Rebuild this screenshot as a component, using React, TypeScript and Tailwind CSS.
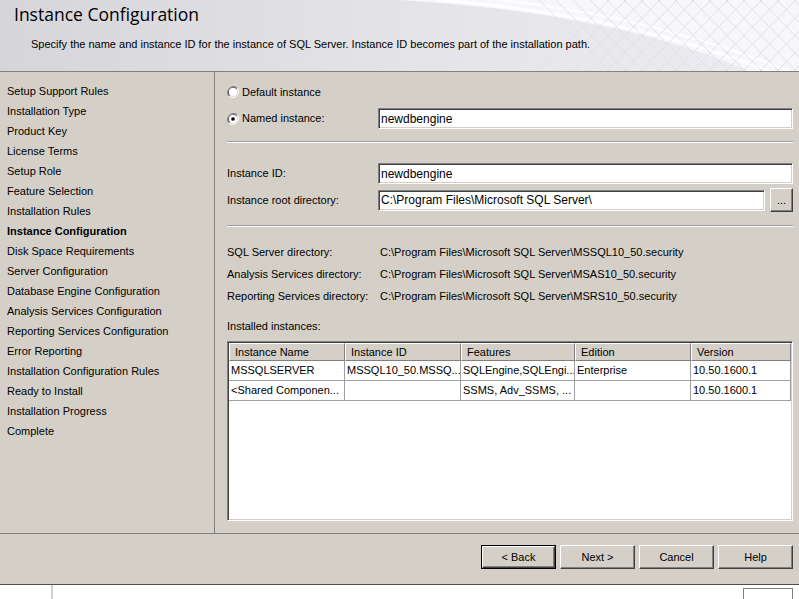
import React from 'react';

const navItems = [
  'Setup Support Rules',
  'Installation Type',
  'Product Key',
  'License Terms',
  'Setup Role',
  'Feature Selection',
  'Installation Rules',
  'Instance Configuration',
  'Disk Space Requirements',
  'Server Configuration',
  'Database Engine Configuration',
  'Analysis Services Configuration',
  'Reporting Services Configuration',
  'Error Reporting',
  'Installation Configuration Rules',
  'Ready to Install',
  'Installation Progress',
  'Complete',
];

const columns = [
  { name: 'Instance Name', w: 'w-[116px]' },
  { name: 'Instance ID', w: 'w-[116px]' },
  { name: 'Features', w: 'w-[114px]' },
  { name: 'Edition', w: 'w-[116px]' },
  { name: 'Version', w: 'w-[100px]' },
];

const rows = [
  ['MSSQLSERVER', 'MSSQL10_50.MSSQ...', 'SQLEngine,SQLEngi...', 'Enterprise', '10.50.1600.1'],
  ['<Shared Componen...', '', 'SSMS, Adv_SSMS, ...', '', '10.50.1600.1'],
];

const sunken =
  'bg-white border border-t-[#808080] border-l-[#808080] border-b-white border-r-white shadow-[inset_1px_1px_0_#404040,inset_-1px_-1px_0_#d4d0c8]';

function Radio({ checked }: { checked?: boolean }) {
  return (
    <svg width="12" height="12" viewBox="0 0 12 12" className="shrink-0">
      <path d="M10.2 1.8A6 6 0 0 0 1.8 10.2" fill="none" stroke="#808080" strokeWidth="1" />
      <path d="M9.5 2.5A5 5 0 0 0 2.5 9.5" fill="none" stroke="#404040" strokeWidth="1" />
      <path d="M1.8 10.2A6 6 0 0 0 10.2 1.8" fill="none" stroke="#ffffff" strokeWidth="1" />
      <circle cx="6" cy="6" r="4.2" fill="#fff" />
      {checked && <circle cx="6" cy="6" r="1.8" fill="#000" />}
    </svg>
  );
}

function Field({ value, className }: { value: string; className?: string }) {
  return (
    <div className={`h-[21px] flex items-center pl-[2px] ${sunken} ${className ?? ''}`}>
      <span className="leading-none text-[12px] text-black">{value}</span>
    </div>
  );
}

function Separator() {
  return <div className="h-[2px] border-t border-t-[#a0a0a0] border-b border-b-white" />;
}

function Button({ label, focused }: { label: string; focused?: boolean }) {
  return (
    <div className={`w-[75px] h-[24px] ${focused ? 'border border-black' : ''}`}>
      <div className="h-full flex items-center justify-center bg-[#d4d0c8] border border-t-white border-l-white border-b-[#404040] border-r-[#404040] shadow-[inset_-1px_-1px_0_#808080]">
        <span>{label}</span>
      </div>
    </div>
  );
}

export default function App() {
  return (
    <div className="w-[799px] h-[599px] overflow-hidden bg-white font-['Liberation_Sans',Arial,sans-serif] text-[11px] text-black flex flex-col">
      {/* header */}
      <header className="relative h-[72px] shrink-0 border-b border-b-[#808080] bg-gradient-to-r from-[#d6d6da] via-[#e4e4e8] to-[#ececf2] overflow-hidden">
        <svg className="absolute right-0 top-0" width="400" height="71" viewBox="0 0 400 71">
          <path d="M0 0 C130 8 250 28 350 71 L400 71 L400 0 Z" fill="#f7f7fb" />
          <path d="M40 0 C160 10 270 32 370 71" fill="none" stroke="#ffffff" strokeWidth="3" />
          <path d="M100 0 C210 12 300 36 390 71" fill="none" stroke="#ffffff" strokeWidth="2" />
          {Array.from({ length: 16 }).map((_, i) => (
            <line key={i} x1={140 + i * 17} y1="0" x2={210 + i * 17} y2="71" stroke="#e0e0e8" strokeWidth="1" />
          ))}
          {Array.from({ length: 16 }).map((_, i) => (
            <line key={'b' + i} x1={210 + i * 17} y1="0" x2={140 + i * 17} y2="71" stroke="#e0e0e8" strokeWidth="1" />
          ))}
        </svg>
        <div className="relative pl-[14px] pt-[2px]">
          <h1 className="font-['Open_Sans',sans-serif] text-[17.5px] leading-[24px] text-black">Instance Configuration</h1>
          <p className="pl-[17px] pt-[11px] leading-[14px]">
            Specify the name and instance ID for the instance of SQL Server. Instance ID becomes part of the installation path.
          </p>
        </div>
      </header>

      {/* main */}
      <div className="h-[462px] shrink-0 flex bg-[#d4d0c8] border-b border-b-[#808080]">
        <nav className="w-[215px] shrink-0 border-r border-r-[#808080] pt-[9px] pl-[7px] flex flex-col">
          {navItems.map((item) => (
            <div key={item} className={`h-[20px] leading-[20px] ${item === 'Instance Configuration' ? 'font-bold' : ''}`}>
              {item}
            </div>
          ))}
        </nav>

        <section className="flex-1 pl-[12px] pr-[6px] pt-[10px] flex flex-col">
          <div className="h-[20px] flex items-center gap-[3px]">
            <Radio />
            <span>Default instance</span>
          </div>
          <div className="mt-[6px] flex items-center">
            <div className="w-[151px] flex items-center gap-[3px]">
              <Radio checked />
              <span>Named instance:</span>
            </div>
            <Field value="newdbengine" className="flex-1" />
          </div>

          <div className="mt-[12px]">
            <Separator />
          </div>

          <div className="mt-[20px] flex items-center">
            <div className="w-[151px]">Instance ID:</div>
            <Field value="newdbengine" className="flex-1" />
          </div>
          <div className="mt-[4px] h-[24px] flex items-center">
            <div className="w-[151px]">Instance root directory:</div>
            <Field value="C:\Program Files\Microsoft SQL Server\" className="flex-1" />
            <div className="ml-[5px] w-[23px] h-[24px] flex items-end justify-center pb-[5px] bg-[#d4d0c8] border border-t-white border-l-white border-b-[#404040] border-r-[#404040] shadow-[inset_-1px_-1px_0_#808080] leading-none">
              ...
            </div>
          </div>

          <div className="mt-[13px]">
            <Separator />
          </div>

          <div className="mt-[14px] flex flex-col">
            {[
              ['SQL Server directory:', 'C:\\Program Files\\Microsoft SQL Server\\MSSQL10_50.security'],
              ['Analysis Services directory:', 'C:\\Program Files\\Microsoft SQL Server\\MSAS10_50.security'],
              ['Reporting Services directory:', 'C:\\Program Files\\Microsoft SQL Server\\MSRS10_50.security'],
            ].map(([k, v]) => (
              <div key={k} className="h-[22px] flex items-center">
                <div className="w-[153px]">{k}</div>
                <div>{v}</div>
              </div>
            ))}
          </div>

          <div className="mt-[11px] h-[16px] leading-[16px]">Installed instances:</div>

          <div className={`mt-[7px] h-[180px] p-[1px] ${sunken}`}>
            <div className="flex h-[18px] bg-[#d4d0c8]">
              {columns.map((c) => (
                <div
                  key={c.name}
                  className={`${c.w} shrink-0 pl-[5px] flex items-center border-t border-t-white border-l border-l-white border-r border-r-[#808080] border-b border-b-[#808080]`}
                >
                  {c.name}
                </div>
              ))}
            </div>
            {rows.map((r, i) => (
              <div key={i} className="flex h-[20px]">
                {r.map((cell, j) => (
                  <div
                    key={j}
                    className={`${columns[j].w} shrink-0 pl-[2px] flex items-center border-r border-b border-[#a0a0a0] whitespace-nowrap overflow-hidden`}
                  >
                    {cell}
                  </div>
                ))}
              </div>
            ))}
          </div>
        </section>
      </div>

      {/* button bar */}
      <footer className="h-[51px] shrink-0 bg-[#d4d0c8] border-b border-b-[#505050] flex justify-end items-start gap-[4px] pt-[11px] pr-[6px]">
        <Button label="< Back" focused />
        <Button label="Next >" />
        <Button label="Cancel" />
        <Button label="Help" />
      </footer>

      {/* below window */}
      <div className="flex-1 flex items-start">
        <div className="ml-[51px] w-[2px] h-full bg-[#d0d0d0]" />
        <div className="ml-auto mr-[6px] mt-[3px] w-[50px] h-[20px] border border-[#808080]" />
      </div>
    </div>
  );
}
